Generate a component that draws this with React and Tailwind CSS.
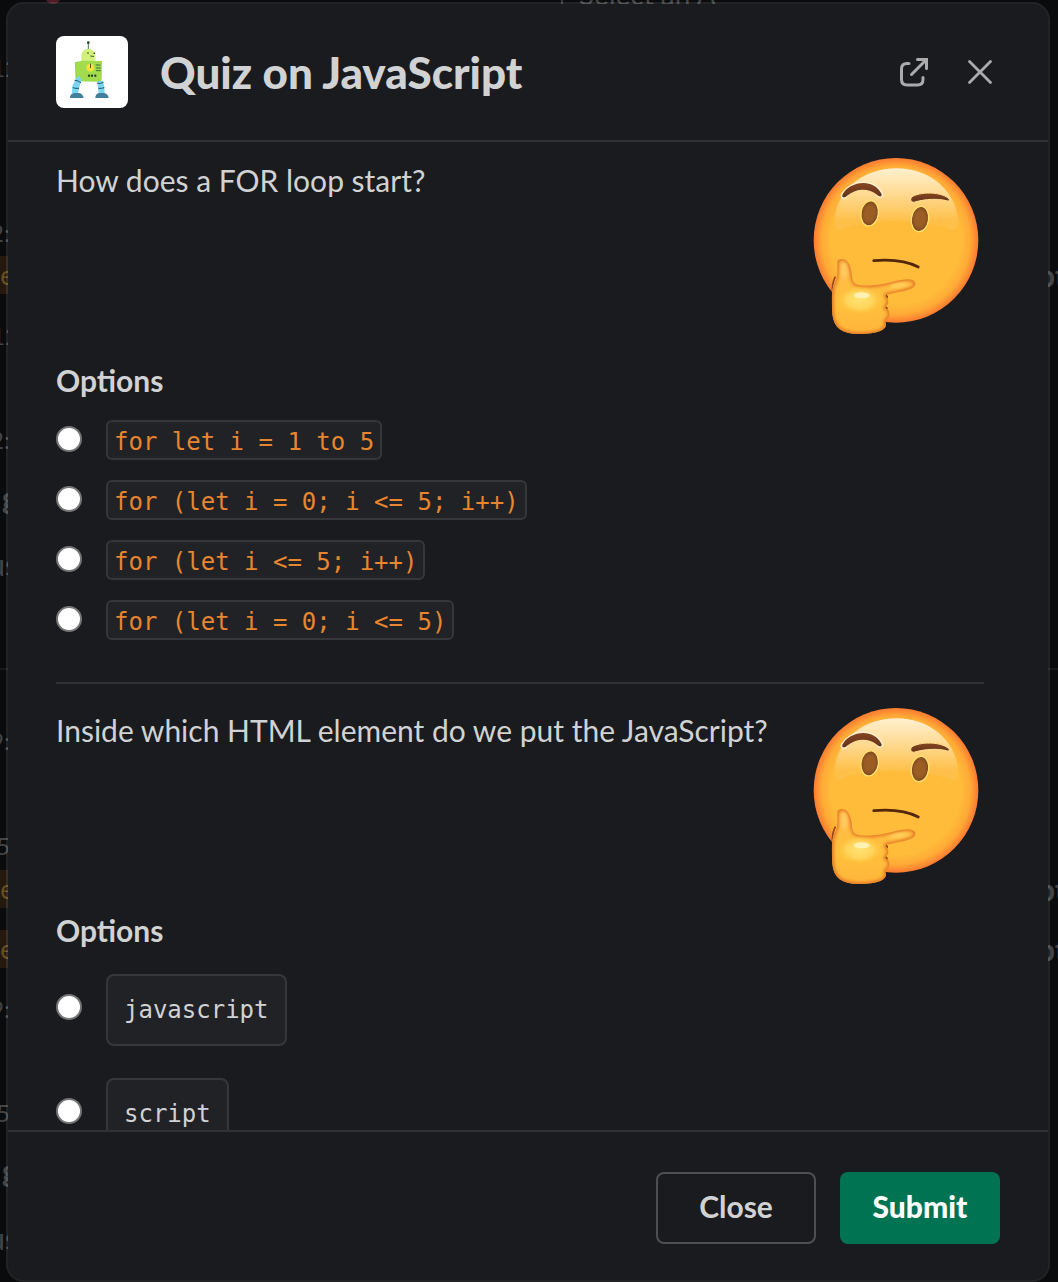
import React from "react";

const LATO = "font-['Lato',sans-serif]";
const MONO = "font-['DejaVu_Sans_Mono',monospace]";

const QUESTIONS = [
  {
    id: "q1",
    text: "How does a FOR loop start?",
    block: false,
    options: [
      "for let i = 1 to 5",
      "for (let i = 0; i <= 5; i++)",
      "for (let i <= 5; i++)",
      "for (let i = 0; i <= 5)",
    ],
  },
  {
    id: "q2",
    text: "Inside which HTML element do we put the JavaScript?",
    block: true,
    options: ["javascript", "script"],
  },
];

function RobotLogo() {
  return (
    <svg viewBox="18 18 216 216" className="size-[72px] shrink-0 rounded-lg bg-white" aria-hidden="true">
      <path d="M115 58V40" stroke="#2f5a2b" strokeWidth="2.5" />
      <circle cx="115" cy="38" r="4" fill="#1f4a24" />
      <path d="M94 96V76a20 19 0 0 1 42 0v20z" fill="#d3f07c" />
      <circle cx="114" cy="69" r="2.5" fill="#23421f" />
      <circle cx="133" cy="70" r="2.5" fill="#23421f" />
      <path d="M121 78l11 1.500" stroke="#23421f" strokeWidth="2.5" />
      <path d="M76 96l20-4 60 1-1 58q-3 4-9 4l-66-1-3-5z" fill="#a2dc4e" />
      <path d="M76 96l3 54 4 4" stroke="#8bc540" strokeWidth="2" fill="none" />
      <circle cx="121" cy="113" r="11.500" fill="#fbe038" />
      <path d="M121.500 101v13" stroke="#4d5a1c" strokeWidth="3" />
      <path d="M137 105h14M138 114h14M138 122h14" stroke="#2f5a2b" strokeWidth="2.5" />
      <g fill="#23421f">
        <circle cx="117" cy="137" r="3.500" />
        <circle cx="126" cy="137" r="3.500" />
        <circle cx="136" cy="137" r="3.500" />
      </g>
      <path d="M79 144l8-7 8 12-6 19-5 22-19-1 3-24z" fill="#79d7f3" />
      <path d="M141 154l18-2 4 18 1 20-18 1-2-18z" fill="#79d7f3" />
      <path d="M74 151q10 0 19 7M68 173q9 3 19 2M142 160q10 2 18-3M145 175q10 1 18-2" stroke="#23506b" strokeWidth="3" fill="none" />
      <path d="M60 204q0-13 13-15h14q11 2 14 15z" fill="#427f9d" />
      <path d="M136 204q0-13 12-15h15q12 3 13 15z" fill="#427f9d" />
    </svg>
  );
}

function ThinkingFace({ id }) {
  return (
    <svg viewBox="24 24 528 528" className="size-[176px] shrink-0 overflow-visible" role="img" aria-label="Thinking face">
      <defs>
        <radialGradient id={id + "-face"} cx="0.5" cy="0.5" r="0.5">
          <stop offset="0.78" stopColor="#ffbc3a" />
          <stop offset="0.9" stopColor="#ffab36" />
          <stop offset="1" stopColor="#fb7a31" />
        </radialGradient>
        <linearGradient id={id + "-shine"} x1="0" y1="0" x2="0" y2="1">
          <stop offset="0" stopColor="#fff0cf" />
          <stop offset="0.45" stopColor="#ffd88d" />
          <stop offset="0.85" stopColor="#ffc04a" />
          <stop offset="1" stopColor="#ffc04a" />
        </linearGradient>
        <linearGradient id={id + "-brow"} x1="0" y1="0" x2="0" y2="1">
          <stop offset="0" stopColor="#85451f" />
          <stop offset="1" stopColor="#63331d" />
        </linearGradient>
        <radialGradient id={id + "-eye"} cx="0.5" cy="0.5" r="0.55">
          <stop offset="0.5" stopColor="#9a5e25" />
          <stop offset="1" stopColor="#7a4220" />
        </radialGradient>
        <linearGradient id={id + "-hand"} x1="0" y1="0" x2="0" y2="1">
          <stop offset="0" stopColor="#ffb84a" />
          <stop offset="0.6" stopColor="#ffc03c" />
          <stop offset="1" stopColor="#ffb43a" />
        </linearGradient>
        <radialGradient id={id + "-palm"}>
          <stop offset="0" stopColor="#ffe272" />
          <stop offset="0.6" stopColor="#ffd55c" />
          <stop offset="1" stopColor="#ffc740" stopOpacity="0" />
        </radialGradient>
        <filter id={id + "-soft"} x="-20%" y="-20%" width="140%" height="140%">
          <feGaussianBlur stdDeviation="4" />
        </filter>
        <clipPath id={id + "-clip"}>
          <path d="M113 331c15-10 33-1 38 21 8 20 2 42 16 50 20 8 58 4 84-1 30-6 72-20 88-10 15 9 5 22-10 27-21 7-48 12-68 16-10 3 5 9 4 23 0 10-10 12-9 17 15 4 17 27 4 36-9 5-1 7-2 15-3 17-27 26-79 27-51 1-78-17-82-60-2-39-3-65 3-83 9-22 11-24 12-43 0-15-1-30 1-35z" />
        </clipPath>
      </defs>
      <circle cx="288" cy="271" r="247" fill={"url(#" + id + "-face)"} />
      <path d="M103 224C103 126 184 55 290 55s185 75 185 169c-2 15-14 18-27 14-25-10-78-25-160-25s-130 13-160 24c-14 4-24 1-25-13z" fill={"url(#" + id + "-shine)"} />
      <path d="M132 137c25-39 86-46 108-4" stroke="#fff1d3" strokeWidth="20" strokeLinecap="round" fill="none" opacity="0.9" />
      <path d="M127 135c18-40 94-55 118-2 1 9-8 7-14 1-24-19-60-22-91 4-7 7-15 5-13-3z" fill={"url(#" + id + "-brow)"} />
      <path d="M333 144c10-16 84-24 114 2 3 8-3 8-12 5-26-5-55-4-87 4-12 5-18-3-15-11z" fill={"url(#" + id + "-brow)"} stroke="#ffdf8f" strokeWidth="3" />
      <ellipse cx="209" cy="190" rx="26" ry="38" transform="rotate(8 209 190)" fill={"url(#" + id + "-eye)"} stroke="#ffe26e" strokeWidth="4" />
      <ellipse cx="360" cy="207" rx="26" ry="38" transform="rotate(8 360 207)" fill={"url(#" + id + "-eye)"} stroke="#ffe26e" strokeWidth="4" />
      <path d="M221 332c45-4 92-3 134 19" stroke="#52270c" strokeWidth="8" strokeLinecap="round" fill="none" />
      <path d="M106 380q-10 20-9 47" stroke="#954a1c" strokeWidth="5" fill="none" />
      <path d="M255 437q10 3 2 8M256 472q8 5 1 12" stroke="#6b3517" strokeWidth="7" fill="none" />
      <g clipPath={"url(#" + id + "-clip)"}>
        <rect x="90" y="320" width="270" height="240" fill={"url(#" + id + "-hand)"} />
        <path d="M113 331c15-10 33-1 38 21 8 20 2 42 16 50 20 8 58 4 84-1 30-6 72-20 88-10 15 9 5 22-10 27-21 7-48 12-68 16-10 3 5 9 4 23 0 10-10 12-9 17 15 4 17 27 4 36-9 5-1 7-2 15-3 17-27 26-79 27-51 1-78-17-82-60-2-39-3-65 3-83 9-22 11-24 12-43 0-15-1-30 1-35z" fill="none" stroke="#e67b26" strokeWidth="12" filter={"url(#" + id + "-soft)"} />
        <ellipse cx="179" cy="450" rx="66" ry="42" fill={"url(#" + id + "-palm)"} />
        <ellipse cx="132" cy="362" rx="11" ry="26" fill="#ffd06a" opacity="0.7" filter={"url(#" + id + "-soft)"} />
        <ellipse cx="297" cy="406" rx="28" ry="7" transform="rotate(-9 297 406)" fill="#ffd05c" filter={"url(#" + id + "-soft)"} />
        <ellipse cx="185" cy="436" rx="24" ry="9" fill="#fff0b4" />
      </g>
    </svg>
  );
}

function Option({ name, label, block }) {
  const id = name + "-" + label;
  return (
    <div className="flex items-start gap-6">
      <input
        id={id}
        type="radio"
        name={name}
        className={
          "size-[26px] shrink-0 appearance-none rounded-full border-2 border-[#767676] bg-white checked:border-8 checked:border-[#007a5a] " +
          (block ? "mt-5" : "mt-1.5")
        }
      />
      <label
        htmlFor={id}
        className={
          MONO +
          " whitespace-pre border-2 border-[#35373a] bg-[#212225] text-2xl " +
          (block
            ? "rounded-lg px-4 py-4 leading-9 text-[#d1d2d3]"
            : "rounded-md px-1.5 pt-1 leading-8 text-[#e8852f]")
        }
      >
        {label}
      </label>
    </div>
  );
}

function Question({ q }) {
  return (
    <section>
      <div className="flex items-start justify-between gap-6">
        <p className="text-[30px] leading-[44px]">{q.text}</p>
        <ThinkingFace id={q.id} />
      </div>
      <fieldset className="mt-6">
        <legend className="text-[30px] leading-[44px] font-bold">Options</legend>
        <div className={q.block ? "mt-[22px] flex flex-col gap-8" : "mt-[18px] flex flex-col gap-5"}>
          {q.options.map((o) => (
            <Option key={o} name={q.id} label={o} block={q.block} />
          ))}
        </div>
      </fieldset>
    </section>
  );
}

const ROW = "flex h-[38px] items-center justify-end whitespace-nowrap leading-[38px] ";
const TIME = ROW + "text-2xl ";
const CODE = ROW + "w-[14px] bg-[#24180f] text-[26px] text-[#67501b] ";
const RIGHT = "flex h-[38px] items-center whitespace-nowrap text-[30px] leading-[34px] font-bold ";

function Backdrop() {
  return (
    <div aria-hidden="true" className="absolute inset-0 flex justify-between overflow-hidden text-[#424446]">
      <div className="w-[10px] shrink-0">
        <div className={TIME + "mt-[49px] w-[19px]"}>12</div>
        <div className={TIME + "mt-[127px]"}>2:</div>
        <div className={CODE + "mt-1"}>e</div>
        <div className={TIME + "mt-[23px] w-[19px]"}>12</div>
        <div className={TIME + "mt-[66px]"}>2:</div>
        <div className={ROW + "mt-[19px] w-[18px] text-[30px] font-black"}>g</div>
        <div className={ROW + "mt-[29px] w-[18px] text-[30px]"}>us</div>
        <div className="mt-[85px] h-[2px] bg-[#17181a]" />
        <div className={TIME + "mt-[52px]"}>9:</div>
        <div className={TIME + "mt-[67px]"}>5</div>
        <div className={CODE + "mt-[5px]"}>e</div>
        <div className={CODE + "mt-[22px]"}>e</div>
        <div className={TIME + "mt-[22px]"}>9:</div>
        <div className={TIME + "mt-[66px]"}>5</div>
        <div className={ROW + "mt-[19px] w-[18px] text-[30px] font-black"}>g</div>
        <div className={ROW + "mt-[30px] w-[18px] text-[30px]"}>us</div>
      </div>
      <div className="flex h-1 flex-1 items-end overflow-hidden">
        <div className="ml-[35px] size-4 shrink-0 rounded-full bg-[#4d1c26]" />
        <div className="ml-[500px] flex items-end gap-4 whitespace-nowrap">
          <span className="h-4 w-0.5 bg-[#38393b]" />
          <span className="text-[28px] leading-5">Select an A</span>
        </div>
      </div>
      <div className="w-5 shrink-0">
        <div className={RIGHT + "mt-[256px]"}>pt</div>
        <div className="mt-[374px] h-[2px] bg-[#17181a]" />
        <div className={RIGHT + "mt-[200px]"}>pt</div>
        <div className={RIGHT + "mt-[22px]"}>pt</div>
      </div>
    </div>
  );
}

export default function App() {
  return (
    <div className={LATO + " relative flex h-screen flex-col overflow-hidden bg-[#0a0b0d] pt-[2px] pr-2 pl-1.5 text-[#d1d2d3]"}>
      <Backdrop />
      <div
        role="dialog"
        aria-labelledby="quiz-title"
        className="relative flex min-h-0 flex-1 flex-col overflow-hidden rounded-[18px] border-2 border-white/10 bg-[#1a1b1e] bg-clip-padding"
      >
        <header className="flex items-center border-b-2 border-[#303134] py-8 pr-[50px] pl-12">
          <RobotLogo />
          <h1 id="quiz-title" className="ml-8 flex-1 text-[44px] leading-[54px] font-black">
            Quiz on JavaScript
          </h1>
          <div className="flex gap-[30px] text-[#ababad]">
            <button type="button" aria-label="Open in new window" className="flex size-9 items-center justify-center">
              <svg viewBox="0 0 36 36" className="size-9" fill="none" stroke="currentColor" strokeWidth="3" strokeLinecap="round" strokeLinejoin="miter" aria-hidden="true">
                <path d="M13 9.500h-2q-5.500 0-5.500 5.500v10.500q0 5.500 5.500 5.500h10.500q5.500 0 5.500-5.500v-2" />
                <path d="M15.500 20.500L30 6M21.500 5.500h9v9" />
              </svg>
            </button>
            <button type="button" aria-label="Close dialog" className="flex size-9 items-center justify-center">
              <svg viewBox="0 0 36 36" className="size-9" fill="none" stroke="currentColor" strokeWidth="2.800" strokeLinecap="round" aria-hidden="true">
                <path d="M7.500 7.500l21 21M28.500 7.500l-21 21" />
              </svg>
            </button>
          </div>
        </header>

        <main className="min-h-0 flex-1 overflow-y-auto pt-4 pr-16 pl-12 [scrollbar-width:none]">
          <Question q={QUESTIONS[0]} />
          <hr className="mt-[42px] mb-6 border-t-2 border-[#303134]" />
          <Question q={QUESTIONS[1]} />
        </main>

        <footer className="flex justify-end gap-6 border-t-2 border-[#303134] px-12 pt-10 pb-9 text-[30px] leading-[40px]">
          <button type="button" className="h-[72px] w-40 rounded-lg border-2 border-[#4d4f52] pb-1 font-bold">
            Close
          </button>
          <button type="button" className="h-[72px] w-40 rounded-lg bg-[#007352] pb-1 font-black text-white">
            Submit
          </button>
        </footer>
      </div>
    </div>
  );
}
